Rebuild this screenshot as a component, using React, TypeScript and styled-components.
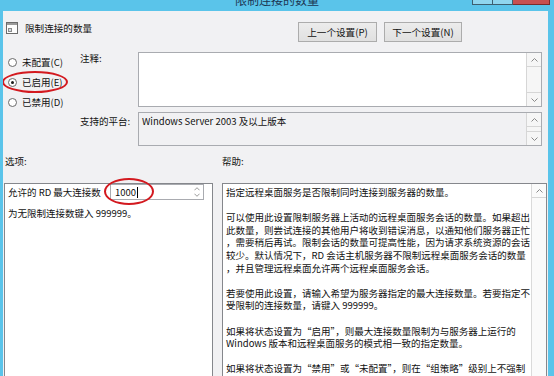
import React from "react";
import styled, { createGlobalStyle } from "styled-components";

const FONT = `"Noto Sans CJK SC", "Noto Sans", sans-serif`;

const Global = createGlobalStyle`
  html, body { margin: 0; padding: 0; background: #5ac4ea; }
  body { font-family: ${FONT}; color: #111; }
  * { box-sizing: border-box; }
`;

const Window = styled.div`
  width: 554px;
  height: 376px;
  overflow: hidden;
  background: #5ac4ea;
  display: flex;
  flex-direction: column;
`;

const TitleBar = styled.div`
  height: 11px;
  flex: none;
  display: grid;
  grid-template-columns: 1fr auto 1fr;
  overflow: hidden;
`;

const TitleText = styled.div`
  grid-column: 2;
  font-size: 12px;
  line-height: 14px;
  margin-top: -7px;
  color: #1c3552;
  white-space: nowrap;
`;

const Controls = styled.div`
  grid-column: 3;
  justify-self: end;
  display: flex;
  margin-right: 4px;
  height: 5px;
`;

const CtrlBtn = styled.div<{ $w: number; $close?: boolean }>`
  width: ${(p) => p.$w}px;
  height: 5px;
  background: ${(p) => (p.$close ? "#c75050" : "#8fd6ef")};
  border: 1px solid ${(p) => (p.$close ? "#7a2b2b" : "#3d5f70")};
  border-top: none;
  & + & { border-left: none; }
`;

const Frame = styled.div`
  flex: 1;
  display: flex;
  padding: 0 6px 0 3px;
  min-height: 0;
`;

const Body = styled.div`
  flex: 1;
  background: #f1f1f3;
  display: flex;
  flex-direction: column;
  overflow: hidden;
  font-size: 9.5px;
`;

const Header = styled.div`
  flex: none;
  height: 41px;
  display: flex;
  align-items: flex-start;
  padding: 11px 86px 0 3px;
`;

const HeadTitle = styled.div`
  display: flex;
  align-items: center;
  gap: 7px;
  height: 12px;
  font-size: 9.6px;
  line-height: 12px;
  white-space: nowrap;
`;

const NavGroup = styled.div`
  margin-left: auto;
  display: flex;
  gap: 7px;
`;

const NavButton = styled.div<{ $w: number }>`
  width: ${(p) => p.$w}px;
  height: 20px;
  display: flex;
  align-items: center;
  justify-content: center;
  background: linear-gradient(#ececec, #e0e0e0);
  border: 1px solid #acacac;
  font-size: 9.6px;
  white-space: nowrap;
`;

const Upper = styled.div`
  flex: none;
  display: grid;
  grid-template-columns: 72px 58px 1fr;
  grid-template-rows: 55px 34px;
  row-gap: 5px;
  padding: 0 6px 0 5px;
`;

const RadioGroup = styled.div`
  grid-column: 1;
  grid-row: 1 / span 2;
  display: flex;
  flex-direction: column;
`;

const RadioItem = styled.div`
  position: relative;
  height: 20px;
  display: flex;
  align-items: center;
  gap: 5px;
  white-space: nowrap;
`;

const RadioCircle = styled.div<{ $on?: boolean }>`
  width: 9px;
  height: 9px;
  border-radius: 50%;
  border: 1px solid #6a6a6a;
  background: #fff;
  display: flex;
  align-items: center;
  justify-content: center;
  &::after {
    content: "";
    display: ${(p) => (p.$on ? "block" : "none")};
    width: 3px;
    height: 3px;
    border-radius: 50%;
    background: #1a1a1a;
  }
`;

const RedEllipse = styled.div<{ $l: number; $t: number; $w: number; $h: number }>`
  position: absolute;
  left: ${(p) => p.$l}px;
  top: ${(p) => p.$t}px;
  width: ${(p) => p.$w}px;
  height: ${(p) => p.$h}px;
  border: 2px solid #d3191f;
  border-radius: 50%;
  pointer-events: none;
`;

const FieldLabel = styled.div<{ $row: number; $pt: number }>`
  grid-column: 2;
  grid-row: ${(p) => p.$row};
  line-height: 12px;
  padding-top: ${(p) => p.$pt}px;
  white-space: nowrap;
`;

const TextBox = styled.div<{ $row: number; $ro?: boolean }>`
  grid-column: 3;
  grid-row: ${(p) => p.$row};
  display: flex;
  background: ${(p) => (p.$ro ? "#f1f1f3" : "#fff")};
  border: 1px solid #a9abb0;
`;

const TextArea = styled.div`
  flex: 1;
  padding: 2px 3px;
  line-height: 12px;
  white-space: nowrap;
`;

const ScrollCol = styled.div`
  width: 15px;
  flex: none;
  display: flex;
  flex-direction: column;
  justify-content: space-between;
  background: #f6f6f6;
  border-left: 1px solid #d6d6d6;
`;

const ScrollBtn = styled.div<{ $down?: boolean }>`
  height: 14px;
  display: flex;
  align-items: center;
  justify-content: center;
  border-top: ${(p) => (p.$down ? "1px solid #d6d6d6" : "none")};
  border-bottom: ${(p) => (p.$down ? "none" : "1px solid #d6d6d6")};
`;

const SectionLabels = styled.div`
  flex: none;
  height: 37px;
  display: grid;
  grid-template-columns: 209px 1fr;
  column-gap: 9px;
  padding: 9px 1px 0 1px;
  line-height: 12px;
`;

const SectionLabel = styled.div<{ $pl: number }>`
  padding-left: ${(p) => p.$pl}px;
`;

const Panels = styled.div`
  flex: none;
  height: 220px;
  display: grid;
  grid-template-columns: 209px 1fr;
  column-gap: 9px;
  padding: 0 1px;
`;

const OptionsBox = styled.div`
  background: #fff;
  border: 1px solid #85878c;
  padding: 0 3px;
  display: flex;
  flex-direction: column;
`;

const OptRow = styled.div`
  height: 16px;
  display: flex;
  align-items: center;
  white-space: nowrap;
`;

const OptLabel = styled.div`
  width: 102px;
  flex: none;
`;

const NumInput = styled.div`
  position: relative;
  width: 94px;
  height: 16px;
  border: 1px solid #a9abb0;
  background: #fff;
  display: flex;
  align-items: center;
  padding-left: 4px;
`;

const Caret = styled.span`
  display: inline-block;
  width: 1px;
  height: 11px;
  background: #000;
  margin-left: 1px;
`;

const Spinner = styled.div`
  margin-left: auto;
  width: 10px;
  height: 14px;
  display: flex;
  flex-direction: column;
  justify-content: space-between;
  align-items: center;
  padding: 2px 0;
  margin-right: 1px;
`;

const OptNote = styled.div`
  margin-top: 7px;
  line-height: 12px;
  white-space: nowrap;
`;

const HelpBox = styled.div`
  background: #fff;
  border: 1px solid #85878c;
  display: flex;
`;

const HelpText = styled.div`
  flex: 1;
  padding: 2px 0 0 3px;
`;

const HelpLine = styled.div`
  height: 12.6px;
  line-height: 12.6px;
  white-space: nowrap;
`;

const HelpScroll = styled.div`
  width: 15px;
  flex: none;
  border-left: 1px solid #dadada;
  background: #fafafa;
`;

const Chevron = ({ down, w = 7 }: { down?: boolean; w?: number }) => (
  <svg width={w} height={4} viewBox="0 0 7 4" style={{ display: "block" }}>
    <path
      d={down ? "M0.5 0.5 L3.5 3.5 L6.5 0.5" : "M0.5 3.5 L3.5 0.5 L6.5 3.5"}
      fill="none"
      stroke="#8a8a8a"
      strokeWidth="1"
    />
  </svg>
);

const PolicyIcon = () => (
  <svg width="12" height="12" viewBox="0 0 12 12" style={{ display: "block" }}>
    <rect x="0.5" y="0.5" width="11" height="11" fill="#fdfdfd" stroke="#6b6b6b" />
    <rect x="1" y="1" width="10" height="2" fill="#9a9a9a" />
    <rect x="2.5" y="6.5" width="3" height="3" fill="#d5dde4" stroke="#8a8a8a" />
  </svg>
);

const helpLines = [
  "指定远程桌面服务是否限制同时连接到服务器的数量。",
  "",
  "可以使用此设置限制服务器上活动的远程桌面服务会话的数量。如果超出",
  "此数量，则尝试连接的其他用户将收到错误消息，以通知他们服务器正忙",
  "，需要稍后再试。限制会话的数量可提高性能，因为请求系统资源的会话",
  "较少。默认情况下，RD 会话主机服务器不限制远程桌面服务会话的数量",
  "，并且管理远程桌面允许两个远程桌面服务会话。",
  "",
  "若要使用此设置，请输入希望为服务器指定的最大连接数量。若要指定不",
  "受限制的连接数量，请键入 999999。",
  "",
  "如果将状态设置为“启用”，则最大连接数量限制为与服务器上运行的",
  "Windows 版本和远程桌面服务的模式相一致的指定数量。",
  "",
  "如果将状态设置为“禁用”或“未配置”，则在“组策略”级别上不强制",
  "执行连接数限制。",
];

export default function App() {
  return (
    <>
      <Global />
      <Window>
        <TitleBar>
          <TitleText>限制连接的数量</TitleText>
          <Controls>
            <CtrlBtn $w={21} />
            <CtrlBtn $w={20} />
            <CtrlBtn $w={37} $close />
          </Controls>
        </TitleBar>
        <Frame>
          <Body>
            <Header>
              <HeadTitle>
                <PolicyIcon />
                限制连接的数量
              </HeadTitle>
              <NavGroup>
                <NavButton $w={79}>上一个设置(P)</NavButton>
                <NavButton $w={78}>下一个设置(N)</NavButton>
              </NavGroup>
            </Header>

            <Upper>
              <RadioGroup>
                <RadioItem>
                  <RadioCircle />
                  未配置(C)
                </RadioItem>
                <RadioItem>
                  <RadioCircle $on />
                  已启用(E)
                  <RedEllipse $l={-6} $t={-1} $w={66} $h={22} />
                </RadioItem>
                <RadioItem>
                  <RadioCircle />
                  已禁用(D)
                </RadioItem>
              </RadioGroup>

              <FieldLabel $row={1} $pt={0}>注释:</FieldLabel>
              <TextBox $row={1}>
                <TextArea />
                <ScrollCol>
                  <ScrollBtn><Chevron /></ScrollBtn>
                  <ScrollBtn $down><Chevron down /></ScrollBtn>
                </ScrollCol>
              </TextBox>

              <FieldLabel $row={2} $pt={3}>支持的平台:</FieldLabel>
              <TextBox $row={2} $ro>
                <TextArea>Windows Server 2003 及以上版本</TextArea>
                <ScrollCol>
                  <ScrollBtn><Chevron /></ScrollBtn>
                  <ScrollBtn $down><Chevron down /></ScrollBtn>
                </ScrollCol>
              </TextBox>
            </Upper>

            <SectionLabels>
              <SectionLabel $pl={1}>选项:</SectionLabel>
              <SectionLabel $pl={0}>帮助:</SectionLabel>
            </SectionLabels>

            <Panels>
              <OptionsBox>
                <OptRow>
                  <OptLabel>允许的 RD 最大连接数</OptLabel>
                  <NumInput>
                    1000<Caret />
                    <Spinner>
                      <Chevron w={6} />
                      <Chevron w={6} down />
                    </Spinner>
                    <RedEllipse $l={-7} $t={-7} $w={50} $h={27} />
                  </NumInput>
                </OptRow>
                <OptNote>为无限制连接数键入 999999。</OptNote>
              </OptionsBox>
              <HelpBox>
                <HelpText>
                  {helpLines.map((l, i) => (
                    <HelpLine key={i}>{l || "\u00a0"}</HelpLine>
                  ))}
                </HelpText>
                <HelpScroll>
                  <ScrollBtn><Chevron /></ScrollBtn>
                </HelpScroll>
              </HelpBox>
            </Panels>
          </Body>
        </Frame>
      </Window>
    </>
  );
}
